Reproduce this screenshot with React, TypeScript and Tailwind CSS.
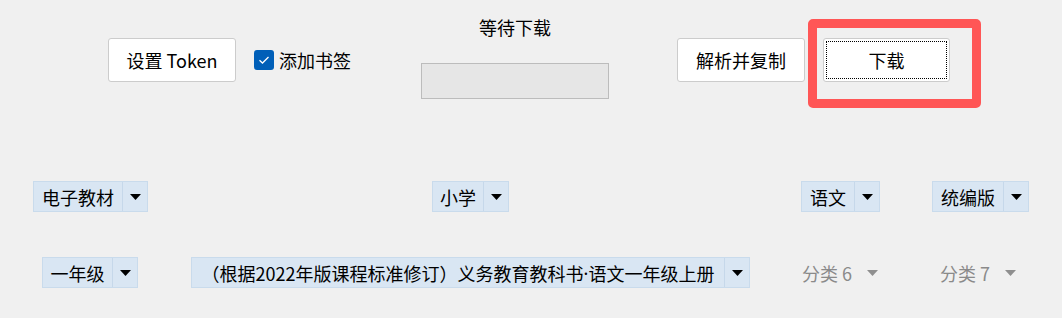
import React from "react";

type ComboProps = {
  label: React.ReactNode;
  textClass: string;
};

function Arrow({ color = "#000000" }: { color?: string }) {
  return (
    <svg width="11" height="6" viewBox="0 0 11 6">
      <polygon points="0,0 11,0 5.5,6" fill={color} />
    </svg>
  );
}

function Combo({ label, textClass }: ComboProps) {
  return (
    <div className="flex h-[31px] border border-[#c9dbec] bg-[#d9e6f3]">
      <div
        className={`flex items-center justify-center text-[18px] leading-none text-black ${textClass}`}
      >
        {label}
      </div>
      <div className="flex w-[25px] items-center justify-center border-l border-[#c6d8ea]">
        <Arrow />
      </div>
    </div>
  );
}

function DisabledCombo({ label }: { label: string }) {
  return (
    <div className="flex h-[31px] items-center text-[18px] leading-none text-[#8a8a8a]">
      <span>{label}</span>
      <span className="ml-[15px]">
        <Arrow color="#8f8f8f" />
      </span>
    </div>
  );
}

export default function App() {
  return (
    <div
      className="h-[318px] w-[1062px] overflow-hidden bg-[#f0f0f0] text-black"
      style={{ fontFamily: '"Noto Sans CJK SC", "Noto Sans", sans-serif' }}
    >
      {/* top toolbar */}
      <div className="flex h-[110px] items-start pl-[108px]">
        <button className="mt-[38px] h-[44px] w-[128px] rounded-[3px] border border-[#cccccc] bg-white text-[18px] leading-none">
          设置 Token
        </button>

        <label className="ml-[18px] mt-[50px] flex items-center gap-[5px]">
          <span className="flex h-[20px] w-[20px] items-center justify-center rounded-[3px] bg-[#005fb8]">
            <svg width="12" height="10" viewBox="0 0 12 10">
              <path
                d="M1.5 5.2 L4.5 8 L10.5 2"
                fill="none"
                stroke="#ffffff"
                strokeWidth="1.3"
              />
            </svg>
          </span>
          <span className="text-[18px] leading-none">添加书签</span>
        </label>

        <div className="ml-[70px] flex w-[188px] flex-col items-center">
          <p className="mt-[16px] text-[18px] leading-[22px]">等待下载</p>
          <div className="mt-[25px] h-[36px] w-[188px] border border-[#bcbcbc] bg-[#e6e6e6]" />
        </div>

        <button className="ml-[68px] mt-[38px] h-[44px] w-[128px] rounded-[3px] border border-[#cccccc] bg-white text-[18px] leading-none">
          解析并复制
        </button>

        <div className="relative ml-[18px] mt-[38px]">
          <button className="flex h-[44px] w-[127px] items-center justify-center rounded-[3px] border border-[#cccccc] bg-white p-[2px] text-[18px] leading-none">
            <span className="flex h-full w-full items-center justify-center border border-dotted border-black">
              下载
            </span>
          </button>
          <div className="pointer-events-none absolute left-[-15px] top-[-19px] h-[89px] w-[173px] rounded-[5px] border-[9px] border-[#ff5656]" />
        </div>
      </div>

      {/* second row */}
      <div className="mt-[71px] flex items-center pl-[33px]">
        <Combo label="电子教材" textClass="w-[88px]" />
        <div className="ml-[284px]">
          <Combo label="小学" textClass="w-[50px]" />
        </div>
        <div className="ml-[292px]">
          <Combo label="语文" textClass="w-[52px]" />
        </div>
        <div className="ml-[52px]">
          <Combo label="统编版" textClass="w-[70px]" />
        </div>
      </div>

      {/* third row */}
      <div className="mt-[45px] flex items-center pl-[42px]">
        <Combo label="一年级" textClass="w-[69px]" />
        <div className="ml-[53px]">
          <Combo
            label={
              <>
                （根据2022年版课程标准修订）义务教育教科书
                <span style={{ fontFamily: '"Noto Sans", sans-serif' }}>·</span>
                语文一年级上册
              </>
            }
            textClass="w-[532px]"
          />
        </div>
        <div className="ml-[52px]">
          <DisabledCombo label="分类 6" />
        </div>
        <div className="ml-[62px]">
          <DisabledCombo label="分类 7" />
        </div>
      </div>
    </div>
  );
}
